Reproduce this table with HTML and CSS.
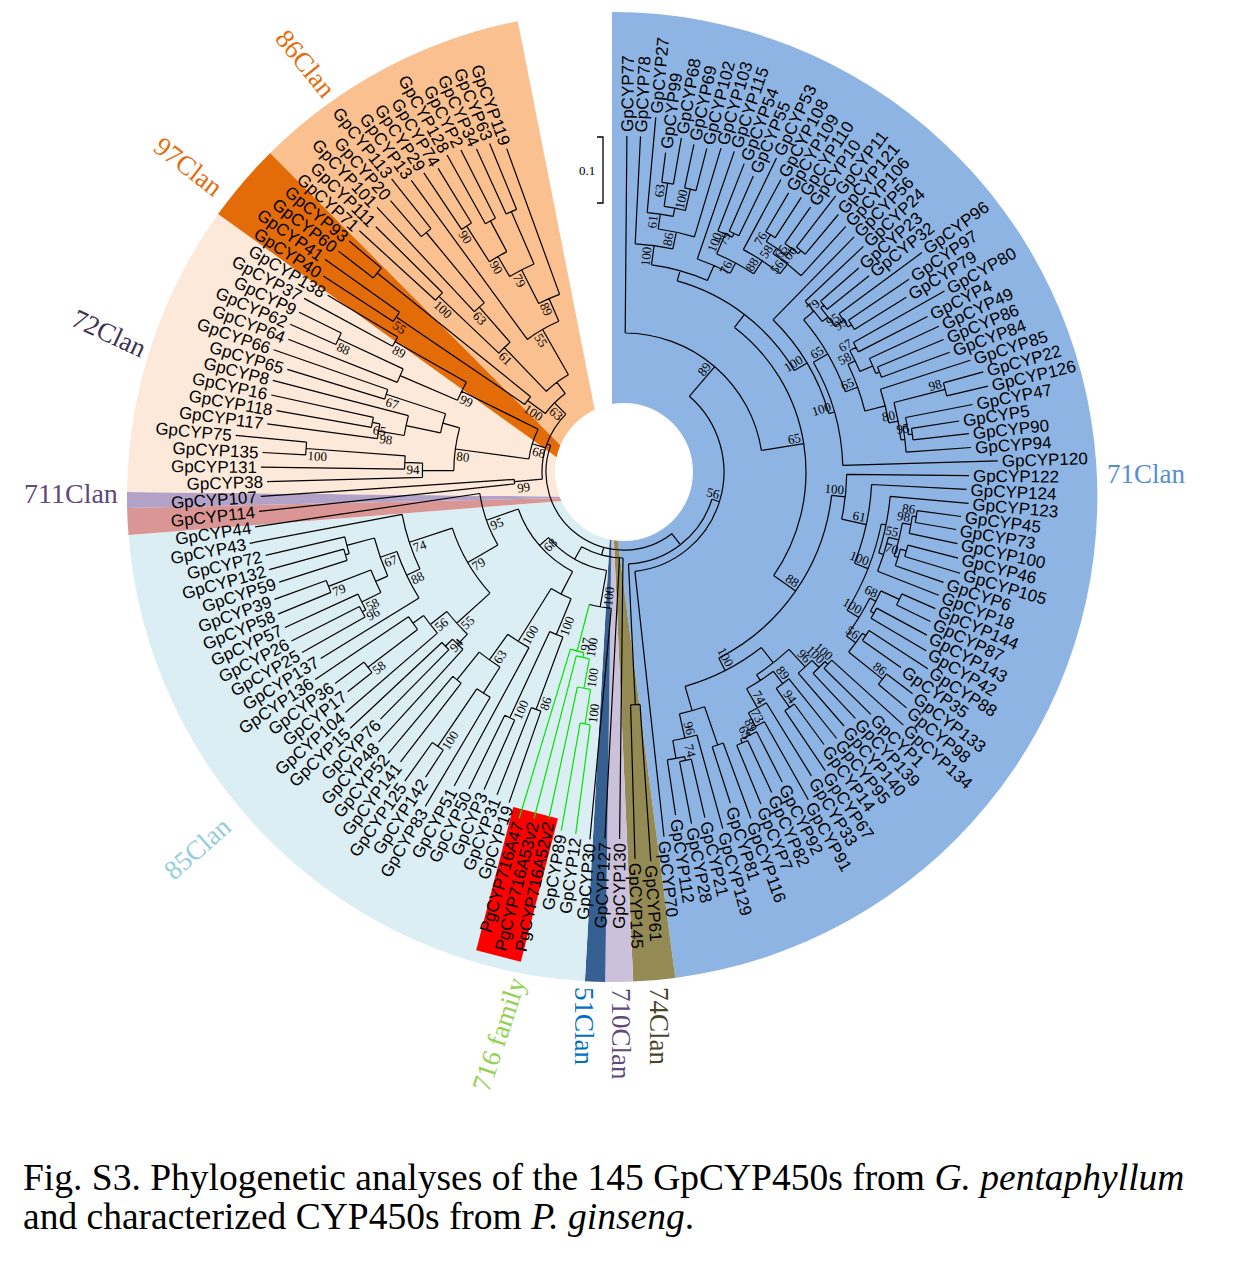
FILE: index.html
```html
<!DOCTYPE html>
<html lang="en">
<head>
<meta charset="utf-8">
<title>Fig. S3 Phylogenetic tree</title>
<link rel="stylesheet" href="styles.css">
</head>
<body>
<div class="figure">
  <svg id="tree" class="tree" xmlns="http://www.w3.org/2000/svg" width="1233" height="1158" viewBox="0 0 1233 1158">
    <g id="wedges"></g>
    <circle class="hole" cx="624" cy="472" r="69"></circle>
    <polygon class="redbox" points="513.3,806.9 557.9,818.5 520.8,961.8 476.2,950.2"></polygon>
    <g id="branches"></g>
    <g id="leaves"></g>
    <g id="boots"></g>
    <path class="scalebar" d="M597,137 H603 V203 H597"></path>
    <text class="boot" x="579" y="175">0.1</text>
    <text class="clan c71" x="1107" y="483">71Clan</text>
    <text class="clan c711" x="24" y="503">711Clan</text>
    <text class="clan c86" transform="translate(274 39) rotate(51)">86Clan</text>
    <text class="clan c97" transform="translate(152 150) rotate(37.6)">97Clan</text>
    <text class="clan c72" transform="translate(70 325) rotate(25)">72Clan</text>
    <text class="clan c85" transform="translate(174 881) rotate(-41.4)">85Clan</text>
    <text class="clan c716" transform="translate(489 1093) rotate(-71.7)">716 family</text>
    <text class="clan c51" transform="translate(575 987) rotate(90)">51Clan</text>
    <text class="clan c710" transform="translate(612 988) rotate(90)">710Clan</text>
    <text class="clan c74" transform="translate(650 987) rotate(90)">74Clan</text>
  </svg>
  <p class="caption">Fig. S3. Phylogenetic analyses of the 145 GpCYP450s from <i>G. pentaphyllum</i><br>and characterized CYP450s from <i>P. ginseng</i>.</p>
</div>
<script src="script.js"></script>
</body>
</html>
```
FILE: styles.css
```css
html, body { margin: 0; padding: 0; background: #fff; }
body { width: 1233px; height: 1265px; overflow: hidden; }
.figure { display: flex; flex-direction: column; }
.tree { display: block; width: 1233px; height: 1158px; }
.caption {
  margin: 0;
  padding-left: 23px;
  font-family: "Liberation Serif", "Times New Roman", serif;
  font-size: 37.5px;
  line-height: 39px;
  color: #000;
  white-space: nowrap;
}
.hole { fill: #fff; }
.redbox { fill: #ff0000; }
.scalebar { fill: none; stroke: #000; stroke-width: 1.3; }
.br { fill: none; stroke: #000; stroke-width: 1.2; }
.br-green { fill: none; stroke: #00e600; stroke-width: 1.2; }
.leaf { font-family: "Liberation Sans", Arial, sans-serif; font-size: 17px; fill: #000; }
.boot { font-family: "Liberation Serif", "Times New Roman", serif; font-size: 13px; fill: #000; }
.clan { font-family: "Liberation Serif", "Times New Roman", serif; font-size: 27px; }
.c71 { fill: #558ed5; }
.c711 { fill: #5f497a; font-size: 28px; }
.c86, .c97 { fill: #e46c0a; }
.c72 { fill: #403152; }
.c85 { fill: #92cddc; }
.c716 { fill: #92d050; }
.c51 { fill: #0070c0; }
.c710 { fill: #604a7b; }
.c74 { fill: #4a452a; }
.w71 { fill: #8eb4e3; }
.w74 { fill: #948a54; }
.w710 { fill: #ccc1da; }
.w51 { fill: #366092; }
.w85 { fill: #dbeef4; }
.w114 { fill: #d99694; }
.w711 { fill: #b3a2c7; }
.w72 { fill: #fde9d9; }
.w97 { fill: #e36c09; }
.w86 { fill: #fac090; }
```
FILE: script.js
```js
(function () {
  var NS = 'http://www.w3.org/2000/svg';
  var CX = 624, CY = 472;
  var AX = 612, AY = 497, AR = 485;
  function f(v) { return v.toFixed(1); }
  function pt(cx, cy, r, t) { var a = t * Math.PI / 180; return [cx + r * Math.sin(a), cy - r * Math.cos(a)]; }
  function el(tag, attrs, parent, text) {
    var e = document.createElementNS(NS, tag);
    for (var k in attrs) e.setAttribute(k, attrs[k]);
    if (text != null) e.textContent = text;
    parent.appendChild(e);
    return e;
  }
  var gW = document.getElementById('wedges');
  var gBr = document.getElementById('branches');
  var gL = document.getElementById('leaves');
  var gB = document.getElementById('boots');

  var W = [['w71', 0, 172.5], ['w74', 172.5, 177.5], ['w710', 177.5, 180.8], ['w51', 180.8, 183.2],
    ['w85', 183.2, 265.5], ['w114', 265.5, 268.7], ['w711', 268.7, 270.6], ['w72', 270.6, 305.7],
    ['w97', 305.7, 315.2], ['w86', 315.2, 348.8]];
  W.forEach(function (w) {
    var p1 = pt(AX, AY, AR, w[1]), p2 = pt(AX, AY, AR, w[2]);
    var large = (w[2] - w[1]) > 180 ? 1 : 0;
    el('path', { d: 'M' + AX + ',' + AY + 'L' + f(p1[0]) + ',' + f(p1[1]) + 'A' + AR + ',' + AR + ' 0 ' + large + ' 1 ' + f(p2[0]) + ',' + f(p2[1]) + 'Z', 'class': w[0] }, gW);
  });

  var L = [
    ["GpCYP77",340],["GpCYP78",340],["GpCYP27",360],["GpCYP99",326],["GpCYP68",343],["GpCYP69",339],["GpCYP102",338],["GpCYP103",342],["GpCYP115",343],["GpCYP54",335],
    ["GpCYP55",327],["GpCYP53",353],["GpCYP108",336],["GpCYP109",328],["GpCYP110",331],["GpCYP10",328],["GpCYP11",352],["GpCYP121",339],["GpCYP106",335],["GpCYP56",333],
    ["GpCYP24",333],["GpCYP23",315],["GpCYP32",318],["GpCYP96",374],["GpCYP97",348],["GpCYP79",336],["GpCYP80",372],["GpCYP4",345],["GpCYP49",351],["GpCYP86",350],
    ["GpCYP84",351],["GpCYP85",368],["GpCYP22",377],["GpCYP126",378],["GpCYP47",359],["GpCYP5",343],["GpCYP90",351],["GpCYP94",352],["GpCYP120",378],["GpCYP122",349],
    ["GpCYP124",347],["GpCYP123",350],["GpCYP45",344],["GpCYP73",341],["GpCYP100",345],["GpCYP46",349],["GpCYP105",355],["GpCYP6",342],["GpCYP18",342],["GpCYP144",344],
    ["GpCYP87",345],["GpCYP143",348],["GpCYP42",355],["GpCYP88",366],["GpCYP35",343],["GpCYP133",368],["GpCYP98",372],["GpCYP134",381],["GpCYP1",350],["GpCYP139",342],
    ["GpCYP140",340],["GpCYP95",345],["GpCYP14",342],["GpCYP67",364],["GpCYP33",361],["GpCYP91",380],["GpCYP92",352],["GpCYP82",357],["GpCYP7",363],["GpCYP116",373],
    ["GpCYP81",352],["GpCYP129",374],["GpCYP21",359],["GpCYP28",362],["GpCYP112",351],["GpCYP70",371],
    ["GpCYP61",394],["GpCYP145",391],["GpCYP130",371],["GpCYP127",371],
    ["GpCYP30",373],["GpCYP12",369],["GpCYP89",368],["PgCYP716A52v2",358],["PgCYP716A53v2",362],["PgCYP716A47",366],["GpCYP19",354],["GpCYP31",351],["GpCYP3",351],["GpCYP50",357],
    ["GpCYP51",361],["GpCYP83",393],["GpCYP142",368],["GpCYP125",383],["GpCYP141",370],["GpCYP52",371],["GpCYP48",369],["GpCYP76",351],["GpCYP15",379],["GpCYP104",372],
    ["GpCYP17",357],["GpCYP36",362],["GpCYP136",376],["GpCYP137",360],["GpCYP25",373],["GpCYP26",377],["GpCYP57",377],["GpCYP58",378],["GpCYP39",376],["GpCYP59",366],
    ["GpCYP132",372],["GpCYP72",372],["GpCYP43",385],["GpCYP44",377],["GpCYP114",371],["GpCYP107",368],
    ["GpCYP38",361],["GpCYP131",367],["GpCYP135",366],["GpCYP75",394],["GpCYP117",364],["GpCYP118",357],["GpCYP16",365],["GpCYP8",367],["GpCYP65",356],["GpCYP66",375],
    ["GpCYP64",365],["GpCYP62",369],["GpCYP9",366],["GpCYP37",368],["GpCYP138",349],
    ["GpCYP40",363],["GpCYP41",371],["GpCYP60",365],["GpCYP93",363],
    ["GpCYP71",362],["GpCYP111",353],["GpCYP101",366],["GpCYP20",362],["GpCYP113",378],["GpCYP13",365],["GpCYP29",364],["GpCYP74",360],["GpCYP128",367],["GpCYP2",365],
    ["GpCYP34",359],["GpCYP63",359],["GpCYP119",348]
  ];
  function A(i) { return 0.5 + i * 2.31; }

  var seed = 20240611;
  function rnd() {
    seed |= 0; seed = seed + 0x6D2B79F5 | 0;
    var t = Math.imul(seed ^ seed >>> 15, 1 | seed);
    t = t + Math.imul(t ^ t >>> 7, 61 | t) ^ t;
    return ((t ^ t >>> 14) >>> 0) / 4294967296;
  }
  function tip(i) { return L[i][1] - 4; }
  function minTip(a, b) { var m = 1e9; for (var i = a; i <= b; i++) m = Math.min(m, tip(i)); return m; }
  function gen(a, b, r) {
    if (a === b) return a;
    var n = b - a + 1, s;
    if (n === 2) s = a;
    else {
      var u = rnd();
      if (u < 0.25) s = a; else if (u < 0.45) s = b - 1; else s = a + Math.floor((n - 1) * (0.3 + 0.4 * rnd()));
    }
    if (s < a) s = a; if (s > b - 1) s = b - 1;
    var node = { r: r, k: [] };
    [[a, s], [s + 1, b]].forEach(function (rg) {
      var x = rg[0], y = rg[1];
      if (x === y) { node.k.push(x); return; }
      var m = y - x + 1;
      var mt = minTip(x, y);
      var maxR = mt - 18 - 8 * Math.log(m) / Math.LN2;
      var cr;
      if (m === 2) cr = maxR - rnd() * 80;
      else cr = r + (maxR - r) * (0.12 + 0.3 * rnd());
      if (cr < r + 4) cr = r + 4;
      if (cr > mt - 10) cr = mt - 10;
      node.k.push(gen(x, y, cr));
    });
    return node;
  }

  var green = { r: 185, g: 1, k: [{ r: 190, k: [{ r: 220, k: [{ r: 255, k: [81, 82] }, 83] }, 84] }, 85] };
  var clan85 = { r: 100, k: [{ r: 137, k: [80, green] }, gen(86, 113, 112)] };
  var clan71 = gen(0, 75, 100);
  var clan74 = { r: 233, k: [76, 77] };
  var root = { r: 78, k: [
    { r: 92, k: [clan71, clan74] },
    { r: 86, k: [78, 79, clan85] },
    { r: 82, k: [{ r: 110, k: [114, 115] }, gen(116, 130, 96), { r: 98, k: [gen(131, 134, 120), gen(135, 147, 112)] }] }
  ] };

  function ang(n) {
    if (typeof n === 'number') return A(n);
    if (n._a == null) n._a = (ang(n.k[0]) + ang(n.k[n.k.length - 1])) / 2;
    return n._a;
  }
  function arc(r, a1, a2) {
    var p1 = pt(CX, CY, r, a1), p2 = pt(CX, CY, r, a2);
    var large = (a2 - a1) > 180 ? 1 : 0;
    return 'M' + f(p1[0]) + ',' + f(p1[1]) + 'A' + f(r) + ',' + f(r) + ' 0 ' + large + ' 1 ' + f(p2[0]) + ',' + f(p2[1]);
  }
  var dB = '', dG = '', boots = [];
  function draw(n, pr, g) {
    var a = ang(n);
    var isLeaf = typeof n === 'number';
    var r = isLeaf ? tip(n) : n.r;
    var gg = g || (!isLeaf && n.g === 1);
    if (pr != null) {
      var p1 = pt(CX, CY, pr, a), p2 = pt(CX, CY, r, a);
      var s = 'M' + f(p1[0]) + ',' + f(p1[1]) + 'L' + f(p2[0]) + ',' + f(p2[1]);
      if (gg) dG += s; else dB += s;
    }
    if (!isLeaf) {
      var s2 = arc(r, ang(n.k[0]), ang(n.k[n.k.length - 1]));
      if (gg) dG += s2; else dB += s2;
      n.k.forEach(function (c) { draw(c, r, gg); });
      if (pr != null && rnd() < 0.62) boots.push([r, a]);
    }
  }
  draw(root, null, false);
  el('path', { d: dB, 'class': 'br' }, gBr);
  el('path', { d: dG, 'class': 'br-green' }, gBr);

  L.forEach(function (it, i) {
    var a = A(i), p = pt(CX, CY, it[1], a);
    var right = a < 180;
    var rot = right ? a - 90 : a - 270;
    el('text', { x: f(p[0]), y: f(p[1]), dy: '0.36em', 'text-anchor': right ? 'start' : 'end',
      transform: 'rotate(' + f(rot) + ' ' + f(p[0]) + ' ' + f(p[1]) + ')', 'class': 'leaf' }, gL, it[0]);
  });

  var BV = [100, 100, 100, 100, 100, 100, 99, 98, 97, 96, 95, 94, 90, 89, 88, 86, 80, 79, 76, 74, 73, 70, 68, 67, 66, 65, 63, 61, 58, 56, 55];
  boots.forEach(function (b) {
    var r = b[0], a = b[1];
    var aa = a - (7 / r) * 180 / Math.PI;
    var p = pt(CX, CY, r - 2, aa);
    var right = aa < 180;
    var rot = right ? aa - 90 : aa - 270;
    el('text', { x: f(p[0]), y: f(p[1]), dy: '0.35em', 'text-anchor': right ? 'end' : 'start',
      transform: 'rotate(' + f(rot) + ' ' + f(p[0]) + ' ' + f(p[1]) + ')', 'class': 'boot' }, gB,
      String(BV[Math.floor(rnd() * BV.length)]));
  });
})();
```
